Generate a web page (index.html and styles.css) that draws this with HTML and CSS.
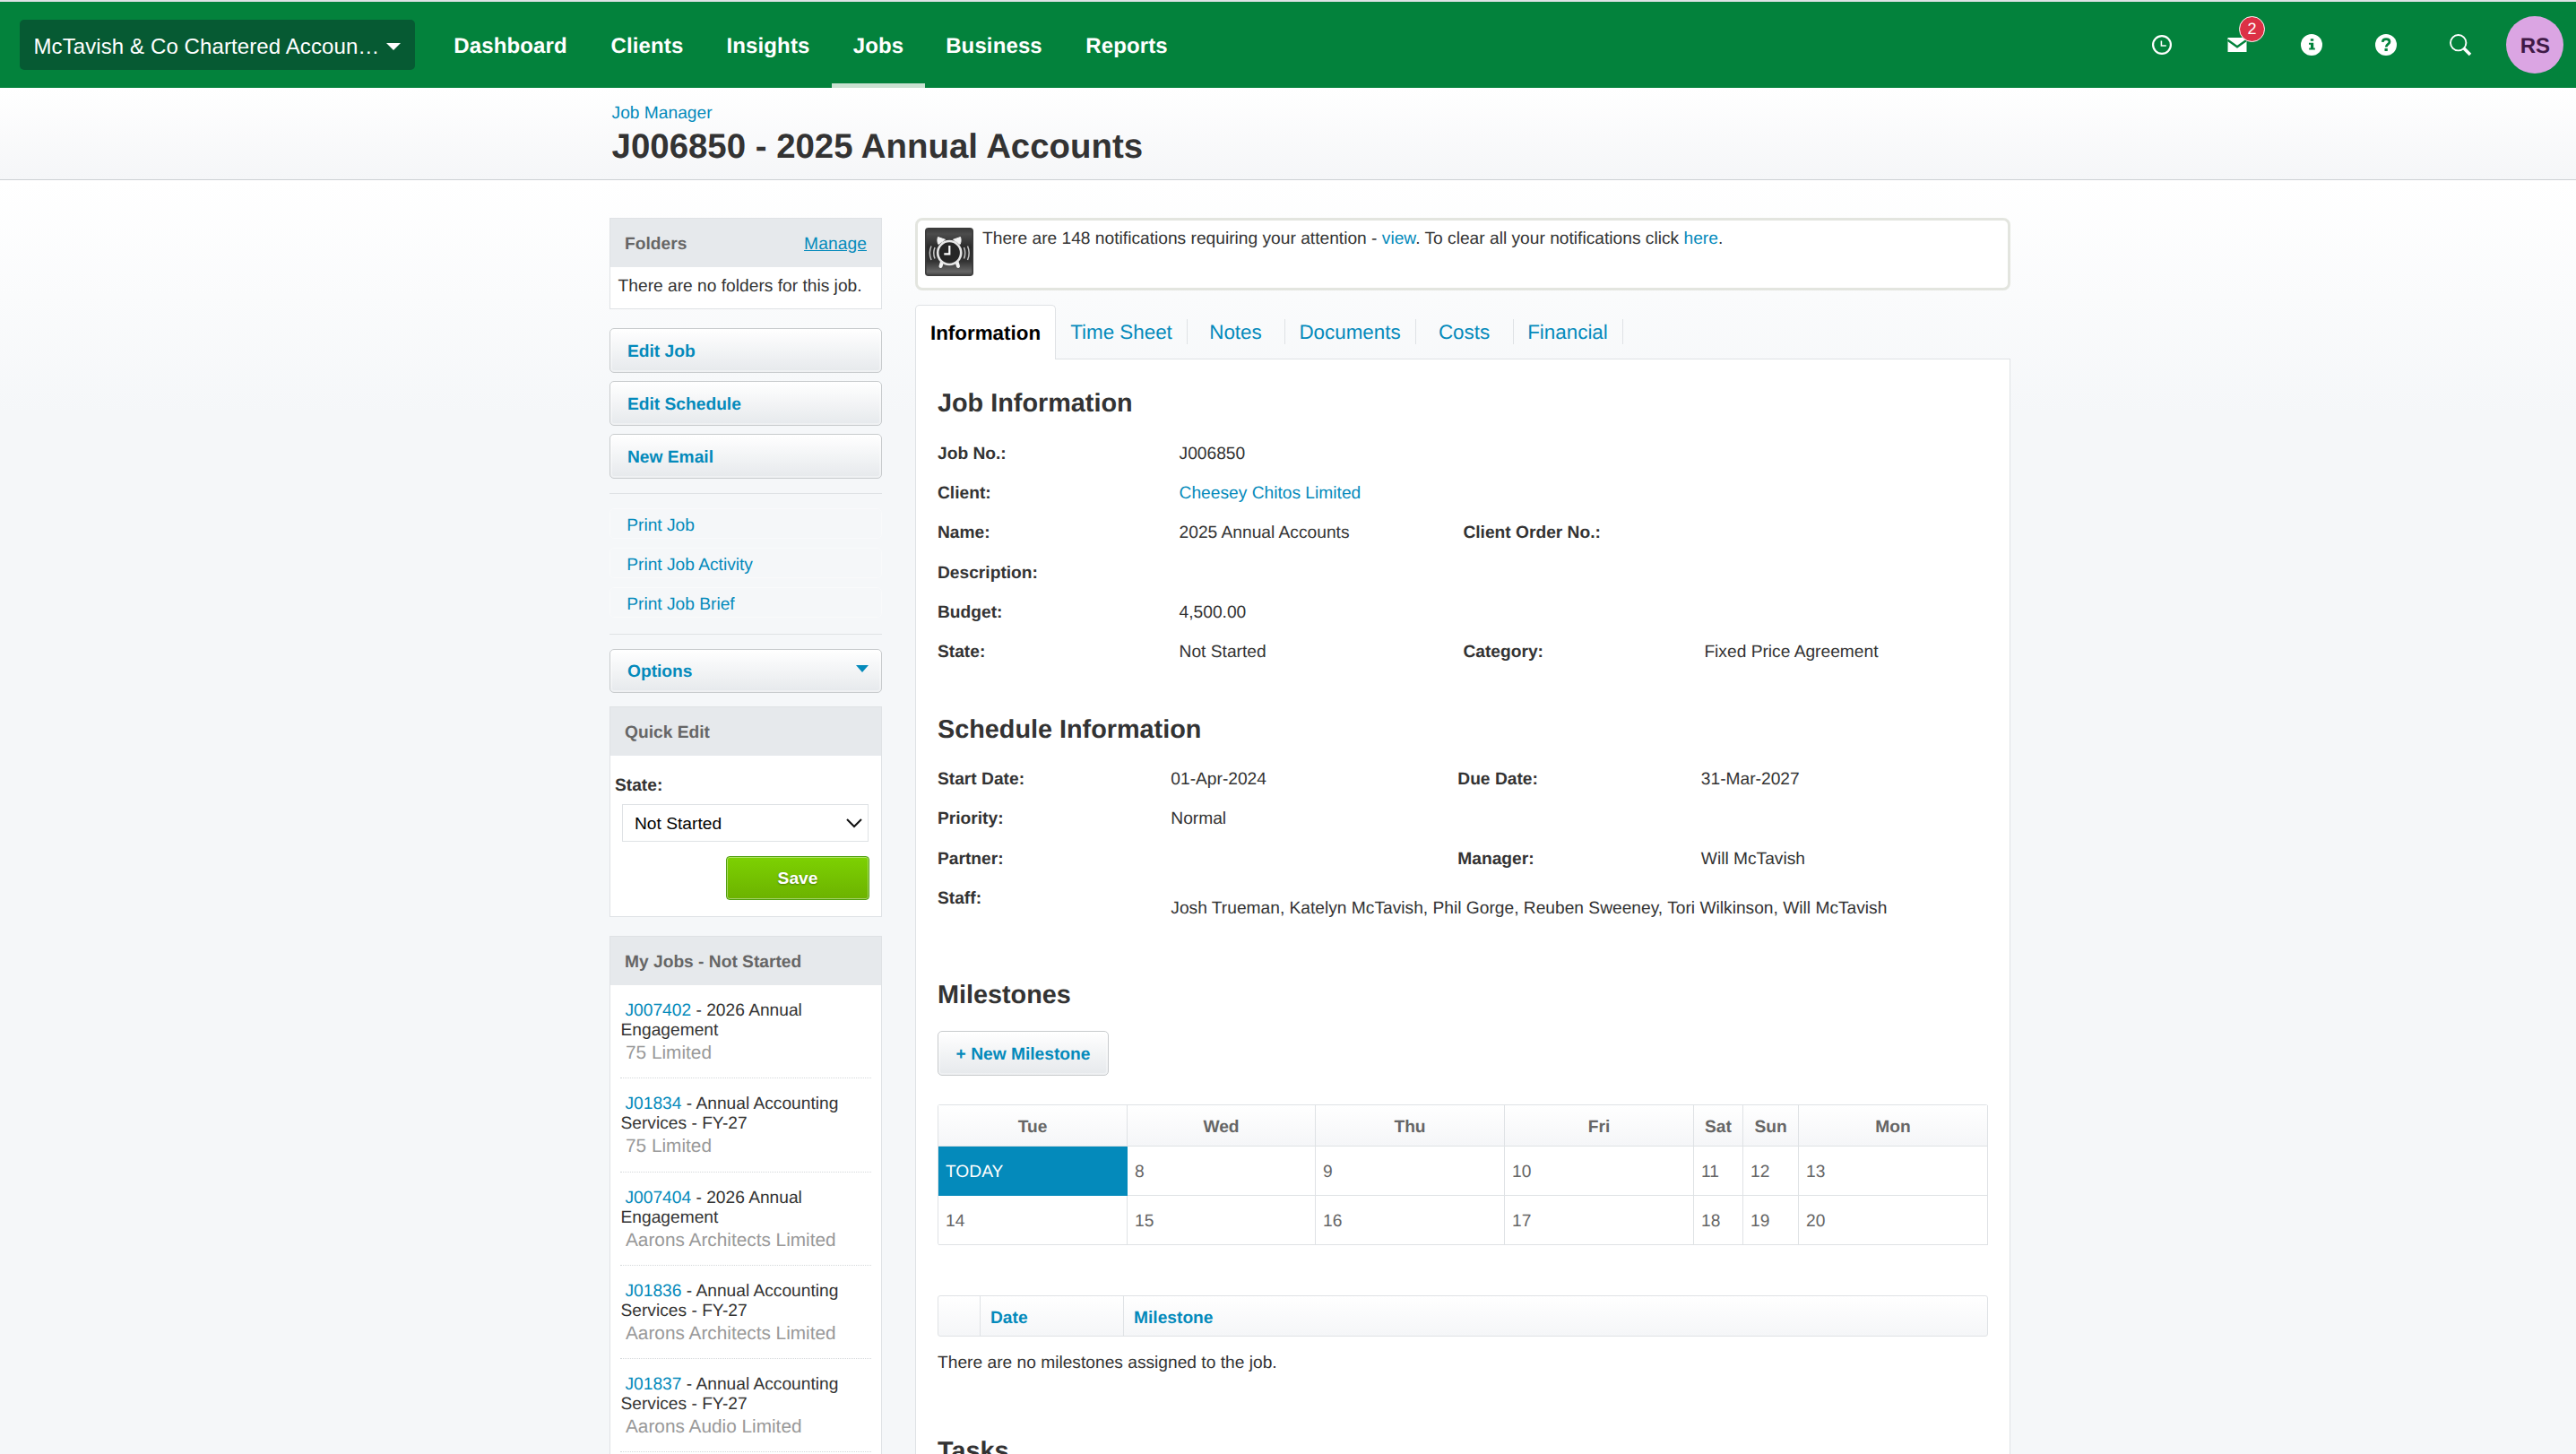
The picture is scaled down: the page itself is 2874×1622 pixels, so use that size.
FILE: index.html
```html
<!DOCTYPE html>
<html lang="en">
<head>
<meta charset="utf-8">
<title>J006850 - 2025 Annual Accounts</title>
<link rel="stylesheet" href="styles.css">
</head>
<body>
<header class="topbar">
  <button class="org">McTavish &amp; Co Chartered Accoun…<svg class="org-caret" viewBox="0 0 16 8"><path d="M0 0h16L8 8z"/></svg></button>
  <nav class="nav">
    <a>Dashboard</a><a>Clients</a><a>Insights</a><a class="current">Jobs</a><a>Business</a><a>Reports</a>
  </nav>
  <div class="tools">
    <a class="tool"><svg viewBox="-12 -12 24 24"><circle r="9.9" class="line"/><path d="M-.6-4.6V1H4.8" class="line hand"/></svg></a>
    <a class="tool"><svg viewBox="-12 -12 24 24"><path d="M-10.5-8h21V8h-21z"/><path d="M-10.5-5.2L0 2.2l10.5-7.4" class="fold"/></svg><span class="badge">2</span></a>
    <a class="tool"><svg viewBox="-12 -12 24 24"><circle r="12"/><path class="cut" d="M-1.2-6.8h3.4v2.6h-3.4zM-3-2.3h5.2v5.7h1.6v2h-6.6v-2h1.8V-.3H-3z"/></svg></a>
    <a class="tool"><svg viewBox="-12 -12 24 24"><circle r="12"/><path class="mark" d="M-3.8-3.2C-3.6-5.4-2-6.4.2-6.4 2.400-6.4 4-5.2 4-3.300 4-.9.2-.8.2 2.600"/><path class="cut" d="M-1.500 4h3.300v3h-3.300z"/></svg></a>
    <a class="tool"><svg viewBox="-12 -12 24 24"><circle cx="-2.300" cy="-2.300" r="8.700" class="line thin"/><path d="M4 4l7 7" class="line handle"/></svg></a>
    <a class="tool"><span class="avatar">RS</span></a>
  </div>
</header>

<section class="titlebar">
  <a class="crumb">Job Manager</a>
  <h1>J006850 - 2025 Annual Accounts</h1>
</section>

<div class="page">
  <aside class="side">
    <section class="panel">
      <h3>Folders <a class="manage">Manage</a></h3>
      <p class="no-folders">There are no folders for this job.</p>
    </section>
    <div class="actions">
      <a class="btn">Edit Job</a>
      <a class="btn">Edit Schedule</a>
      <a class="btn">New Email</a>
    </div>
    <div class="prints">
      <a>Print Job</a>
      <a>Print Job Activity</a>
      <a>Print Job Brief</a>
    </div>
    <a class="btn options">Options<svg viewBox="0 0 14 8"><path d="M0 0h14L7 8z"/></svg></a>
    <section class="panel quick">
      <h3>Quick Edit</h3>
      <form class="quick-form">
        <label for="state">State:</label>
        <div class="select">
          <select id="state"><option>Not Started</option></select>
          <svg viewBox="0 0 18 11"><path d="M1 1l8 8 8-8"/></svg>
        </div>
        <button type="button" class="save">Save</button>
      </form>
    </section>
    <section class="panel">
      <h3>My Jobs - Not Started</h3>
      <ul class="jobs">
        <li><p><a>J007402</a> - 2026 Annual Engagement</p><span>75 Limited</span></li>
        <li><p><a>J01834</a> - Annual Accounting Services - FY-27</p><span>75 Limited</span></li>
        <li><p><a>J007404</a> - 2026 Annual Engagement</p><span>Aarons Architects Limited</span></li>
        <li><p><a>J01836</a> - Annual Accounting Services - FY-27</p><span>Aarons Architects Limited</span></li>
        <li><p><a>J01837</a> - Annual Accounting Services - FY-27</p><span>Aarons Audio Limited</span></li>
      </ul>
    </section>
  </aside>

  <main class="main">
    <div class="notice">
      <svg class="alarm" viewBox="0 0 54 54">
        <defs><linearGradient id="tile" x1="0" y1="0" x2="0" y2="1"><stop offset="0" stop-color="#3a3a3a"/><stop offset=".12" stop-color="#4c4c4c"/><stop offset=".4" stop-color="#2a2a2a"/><stop offset=".7" stop-color="#333"/><stop offset=".92" stop-color="#666"/><stop offset="1" stop-color="#444"/></linearGradient></defs>
        <rect x=".8" y=".8" width="52.400" height="52.400" rx="3" fill="url(#tile)" stroke="#3c3c3c" stroke-width="1.600"/>
        <path d="M14.500 10.500l8 2.800-7.600 5.200c-1.200-2.600-1.300-5.400-.4-8zM39.500 10.500l-8 2.800 7.600 5.200c1.200-2.600 1.300-5.400.4-8z" fill="#f4f4f4" stroke="#f4f4f4" stroke-linejoin="round"/>
        <path d="M19 38l-1.500 5M35.500 38l1.500 5" stroke="#f4f4f4" stroke-width="4" stroke-linecap="round"/>
        <circle cx="27.200" cy="28" r="13" fill="#262626" stroke="#e6e6e6" stroke-width="2.600"/>
        <path d="M27.300 20v9.300h-6" fill="none" stroke="#fff" stroke-width="2.200"/>
        <path d="M11 22c-1.600 4-1.600 8.500 0 12.500M7 20.500c-2.200 5-2.200 10.500 0 15.500M43.500 22c1.600 4 1.600 8.500 0 12.500M47.500 20.500c2.200 5 2.200 10.500 0 15.500" fill="none" stroke="#c4c4c4" stroke-width="1.500"/>
      </svg>
      <p>There are 148 notifications requiring your attention - <a>view</a>. To clear all your notifications click <a>here</a>.</p>
    </div>
    <nav class="tabs">
      <a class="active">Information</a><a class="w-sheet">Time Sheet</a><a>Notes</a><a class="w-docs">Documents</a><a>Costs</a><a class="w-fin">Financial</a>
    </nav>
    <div class="content">
      <h2>Job Information</h2>
      <dl class="facts job">
        <dt>Job No.:</dt><dd class="wide">J006850</dd>
        <dt>Client:</dt><dd class="wide"><a>Cheesey Chitos Limited</a></dd>
        <dt>Name:</dt><dd>2025 Annual Accounts</dd><dt>Client Order No.:</dt><dd></dd>
        <dt>Description:</dt><dd class="wide"></dd>
        <dt>Budget:</dt><dd class="wide">4,500.00</dd>
        <dt>State:</dt><dd>Not Started</dd><dt>Category:</dt><dd>Fixed Price Agreement</dd>
      </dl>
      <h2 class="h-schedule">Schedule Information</h2>
      <dl class="facts schedule">
        <dt>Start Date:</dt><dd>01-Apr-2024</dd><dt>Due Date:</dt><dd>31-Mar-2027</dd>
        <dt>Priority:</dt><dd class="wide">Normal</dd>
        <dt>Partner:</dt><dd></dd><dt>Manager:</dt><dd>Will McTavish</dd>
        <dt>Staff:</dt><dd class="wide staff">Josh Trueman, Katelyn McTavish, Phil Gorge, Reuben Sweeney, Tori Wilkinson, Will McTavish</dd>
      </dl>
      <h2 class="h-milestones">Milestones</h2>
      <a class="btn new">+ New Milestone</a>
      <div class="calendar">
        <b>Tue</b><b>Wed</b><b>Thu</b><b>Fri</b><b>Sat</b><b>Sun</b><b>Mon</b>
        <span class="today">TODAY</span><span>8</span><span>9</span><span>10</span><span>11</span><span>12</span><span>13</span>
        <span>14</span><span>15</span><span>16</span><span>17</span><span>18</span><span>19</span><span>20</span>
      </div>
      <div class="list-head"><a></a><a>Date</a><a>Milestone</a></div>
      <p class="empty">There are no milestones assigned to the job.</p>
      <h2 class="h-tasks">Tasks</h2>
    </div>
  </main>
</div>
</body>
</html>
```
FILE: styles.css
```css
* { box-sizing: border-box; }
html, body { margin: 0; height: 100%; overflow: hidden; }
body {
  display: flex;
  flex-direction: column;
  font: 19.2px/21px "Liberation Sans", Arial, sans-serif;
  color: #333;
  background: #f5f7f9;
  text-rendering: geometricPrecision;
}
h1, h2, h3, p, ul, dl, dd { margin: 0; padding: 0; }
ul { list-style: none; }
a { color: #048abb; text-decoration: none; }
button, select { font: inherit; }

/* Top bar */
.topbar {
  flex: none;
  display: flex;
  height: 98px;
  padding-left: 22px;
  border-top: 2px solid #dfe2e5;
  background: #03823c;
  color: #fff;
}
.org {
  display: flex;
  justify-content: space-between;
  width: 441px;
  height: 56px;
  margin: 20px 18px 0 0;
  padding: 16px 16px 0 15.5px;
  border: 0;
  border-radius: 5px;
  background: #065a33;
  color: #fff;
  font-size: 24px;
  line-height: 27px;
  letter-spacing: .1px;
  white-space: nowrap;
}
.org-caret { width: 16px; height: 8px; margin-top: 10px; fill: #fff; }
.nav {
  display: grid;
  grid-template-columns: 177px 128px 142px 104px 154px 142px;
}
.nav a {
  padding-top: 36px;
  color: #fff;
  font-size: 24px;
  font-weight: bold;
  line-height: 27px;
  letter-spacing: .12px;
  text-align: center;
}
.nav .current { border-bottom: 5px solid #cae1d1; }
.tools { display: flex; margin-left: auto; padding-right: 4px; }
.tool {
  position: relative;
  display: flex;
  align-items: center;
  justify-content: center;
  width: 83.2px;
}
.tool svg { width: 24px; height: 24px; fill: #fff; overflow: visible; }
.tool .line { fill: none; stroke: #fff; stroke-width: 2.2; }
.tool .hand { stroke-width: 1.6; }
.tool .thin { stroke-width: 1.9; }
.tool .handle { stroke-width: 3.6; }
.tool .fold { fill: none; stroke: #03823c; stroke-width: 2.4; }
.tool .cut { fill: #03823c; }
.tool .mark { fill: none; stroke: #03823c; stroke-width: 2.7; }
.badge {
  position: absolute;
  left: 44px;
  top: 16px;
  width: 29px;
  height: 29px;
  border: 1px solid #fff;
  border-radius: 50%;
  background: #dc3045;
  color: #fff;
  font-size: 18px;
  line-height: 27px;
  text-align: center;
}
.avatar {
  width: 64px;
  height: 64px;
  padding-top: 20px;
  border-radius: 50%;
  background: #dba5e3;
  color: #401946;
  font-size: 24px;
  font-weight: bold;
  line-height: 27px;
  text-align: center;
}

/* Title strip */
.titlebar {
  flex: none;
  display: flex;
  flex-direction: column;
  gap: 5px;
  height: 103px;
  padding: 18px 0 0 682.6px;
  border-bottom: 1px solid #cdd0d3;
  background: linear-gradient(#fff, #f5f6f8);
}
h1 { font-size: 38.4px; line-height: 43px; }

/* Page columns */
.page {
  flex: 1;
  display: flex;
  gap: 37px;
  padding: 42px 0 0 680px;
  background: linear-gradient(#fff, #f5f7f9 260px);
}
.side { width: 304px; }
.main { width: 1222px; }

/* Sidebar */
.panel { border: 1px solid #dfe2e5; background: #fff; }
h3 {
  display: flex;
  justify-content: space-between;
  height: 54px;
  padding: 18px 16px 0;
  background: #e6e9ec;
  color: #666;
  font-size: 19.2px;
}
.manage { font-weight: normal; text-decoration: underline; letter-spacing: .1px; }
.no-folders { height: 46px; padding: 11px 0 0 8.6px; }
.btn {
  display: block;
  height: 50px;
  padding: 15px 0 0 19px;
  border: 1px solid #c8cbcd;
  border-radius: 5px;
  background: linear-gradient(#fff, #e6e9ec);
  box-shadow: inset 0 0 0 2px rgba(255, 255, 255, .35);
  font-weight: bold;
}
.actions { display: flex; flex-direction: column; gap: 9px; margin: 21px 0 16px; }
.prints {
  display: flex;
  flex-direction: column;
  gap: 10px;
  padding: 16px 0 18px;
  border: solid #dfe2e5;
  border-width: 1px 0;
}
.prints a {
  height: 34px;
  padding: 8px 0 0 18.2px;
  border: 1px solid #f9fafb;
  border-radius: 5px;
}
.options {
  display: flex;
  justify-content: space-between;
  height: 49px;
  margin: 16px 0 15px;
  padding: 14px 14px 0 19px;
}
.options svg { width: 14px; height: 8px; margin-top: 3px; fill: #048abb; }
.quick { margin-bottom: 21px; }
.quick-form {
  display: flex;
  flex-direction: column;
  padding: 23px 13px 18px 5px;
}
label { font-weight: bold; }
.select { display: grid; width: 275px; margin: 10px 0 16px 8px; align-items: center; }
.select > * { grid-area: 1 / 1; }
.select select {
  appearance: none;
  height: 42px;
  padding: 1px 13px 0;
  border: 1px solid #dfe2e5;
  border-radius: 0;
  background: #fff;
  color: #000;
}
.select svg {
  justify-self: end;
  width: 18px;
  height: 11px;
  margin-right: 7px;
  fill: none;
  stroke: #111;
  stroke-width: 2;
}
.save {
  align-self: flex-end;
  width: 160px;
  height: 49px;
  padding: 0;
  border: 1px solid #50a010;
  border-radius: 4px;
  background: linear-gradient(#7dd102, #6cb200);
  box-shadow: inset 0 0 0 1px rgba(255, 255, 255, .4);
  color: #fff;
  font-weight: bold;
  text-shadow: 0 1px 2px rgba(0, 0, 0, .35);
}
.jobs { padding: 0 11px 40px; }
.jobs li { padding: 18px 0 16.3px; border-bottom: 1px dotted #d5d8db; }
.jobs p { padding-left: .5px; line-height: 22px; text-indent: 5px; }
.jobs span {
  display: block;
  margin-top: 2px;
  padding-left: 6px;
  color: #999;
  font-size: 20.8px;
  line-height: 23px;
}

/* Notice and tabs */
.notice {
  display: flex;
  gap: 10px;
  height: 81px;
  padding: 8px;
  border: 3px solid #e3e5df;
  border-radius: 8px;
  background: #fff;
}
.notice p { padding-top: 2px; }
.alarm { width: 54px; height: 54px; }
.tabs {
  display: flex;
  align-items: flex-start;
  height: 60px;
  margin-top: 16px;
  font-size: 22.4px;
  line-height: 25px;
}
.tabs a {
  width: 109px;
  height: 28px;
  margin-top: 16px;
  padding: 2px 1px 0 0;
  border-right: 1px solid #dfe2e5;
  text-align: center;
}
.tabs .active {
  z-index: 1;
  width: 157px;
  height: 61px;
  margin: 0;
  padding: 18px 0 0;
  border: 1px solid #dfe2e5;
  border-bottom: 0;
  border-radius: 5px 5px 0 0;
  background: #fff;
  color: #000;
  font-weight: bold;
}
.tabs .w-sheet { width: 147px; padding-right: 0; }
.tabs .w-docs { width: 146px; }
.tabs .w-fin { width: 122px; }

/* Job details */
.content {
  height: 1300px;
  padding: 33px 24px 0;
  border: 1px solid #dfe2e5;
  background: #fff;
}
h2 { margin-bottom: 18.4px; font-size: 28.8px; line-height: 32px; }
.facts {
  display: grid;
  grid-auto-rows: 44.2px;
  align-items: center;
}
.job { grid-template-columns: 269.6px 316.8px 269px 1fr; }
.schedule {
  grid-template-columns: 260.3px 320px 271.5px 1fr;
  grid-auto-rows: 44.4px;
}
dt { font-weight: bold; }
.wide { grid-column: span 3; }
.staff { align-self: start; padding-top: 22.5px; }
.h-schedule { margin-top: 48px; margin-bottom: 17.8px; }
.h-milestones { margin-top: 69px; margin-bottom: 24px; }
.new { width: 191px; padding-left: 0; text-align: center; }
.calendar {
  display: grid;
  grid-template-columns: 211px 210px 211px 211px 55px 62px 211px;
  grid-template-rows: 46px 55px 55px;
  margin: 32px 0 56px;
  border: solid #dfe2e5;
  border-width: 1px 0 0 1px;
  border-radius: 3px;
  color: #666;
}
.calendar b, .calendar span { border: solid #dfe2e5; border-width: 0 1px 1px 0; }
.calendar b { padding-top: 14px; background: linear-gradient(#fff, #f5f6f8); text-align: center; }
.calendar span { padding: 18px 0 0 8px; }
.calendar .today { border-color: #048abb; background: #048abb; color: #fff; }
.list-head {
  display: grid;
  grid-template-columns: 47px 160px 1fr;
  height: 46px;
  border: 1px solid #dfe2e5;
  border-radius: 3px;
  background: linear-gradient(#fff, #f5f6f8);
  font-weight: bold;
}
.list-head a { padding: 14px 0 0 11px; border-right: 1px solid #dfe2e5; }
.list-head a:last-child { border-right: 0; }
.empty { padding-top: 19px; }
.h-tasks { margin-top: 72px; }
```
